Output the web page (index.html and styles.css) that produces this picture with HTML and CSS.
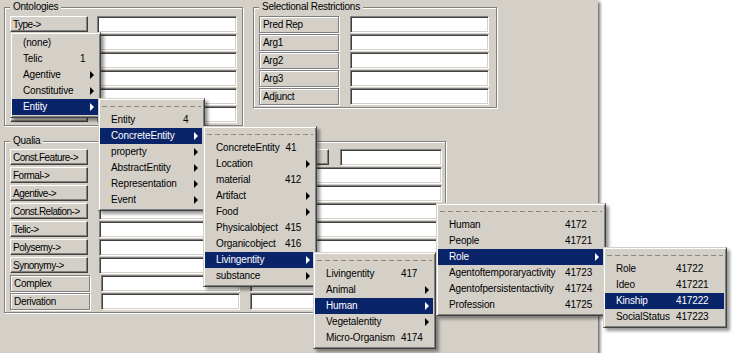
FILE: index.html
```html
<!DOCTYPE html>
<html>
	<head>
		<title>Ontology editor</title>
		<link rel="stylesheet" href="styles.css">
	</head>
	<body>
		<div class="window">
			<div class="top-row">
				<fieldset class="group ontologies">
					<legend>Ontologies</legend>
					<div class="row"><button class="btn">Type-&gt;</button><input class="field" type="text"></div>
					<div class="row"><button class="btn"></button><input class="field" type="text"></div>
					<div class="row"><button class="btn"></button><input class="field" type="text"></div>
					<div class="row"><button class="btn"></button><input class="field" type="text"></div>
					<div class="row"><button class="btn"></button><input class="field" type="text"></div>
					<div class="row"><button class="btn"></button><input class="field" type="text"></div>
				</fieldset>
				<fieldset class="group selectional">
					<legend>Selectional Restrictions</legend>
					<div class="row"><span class="tag">Pred Rep</span><input class="field" type="text"></div>
					<div class="row"><span class="tag">Arg1</span><input class="field" type="text"></div>
					<div class="row"><span class="tag">Arg2</span><input class="field" type="text"></div>
					<div class="row"><span class="tag">Arg3</span><input class="field" type="text"></div>
					<div class="row"><span class="tag">Adjunct</span><input class="field" type="text"></div>
				</fieldset>
			</div>
			<fieldset class="group qualia">
				<legend>Qualia</legend>
				<div class="qualia-cols">
					<div class="col">
						<div class="row"><button class="btn">Const.Feature-&gt;</button><input class="field" type="text"></div>
						<div class="row"><button class="btn">Formal-&gt;</button><input class="field" type="text"></div>
						<div class="row"><button class="btn">Agentive-&gt;</button><input class="field" type="text"></div>
						<div class="row"><button class="btn">Const.Relation-&gt;</button><input class="field" type="text"></div>
						<div class="row"><button class="btn">Telic-&gt;</button><input class="field" type="text"></div>
						<div class="row"><button class="btn">Polysemy-&gt;</button><input class="field" type="text"></div>
						<div class="row"><button class="btn">Synonymy-&gt;</button><input class="field" type="text"></div>
						<div class="row"><span class="tag">Complex</span><input class="field" type="text"></div>
						<div class="row"><span class="tag">Derivation</span><input class="field" type="text"></div>
					</div>
					<div class="col extra">
						<div class="row"><button class="btn"></button><input class="field" type="text"></div>
						<div class="row"><input class="field" type="text"></div>
						<div class="row"><input class="field" type="text"></div>
						<div class="row"><input class="field" type="text"></div>
						<div class="row"><input class="field" type="text"></div>
						<div class="row"><input class="field" type="text"></div>
						<div class="row"><input class="field" type="text"></div>
						<div class="row"><input class="field" type="text"></div>
						<div class="row"><input class="field" type="text"></div>
					</div>
				</div>
			</fieldset>

			<!-- cascade of popup menus opened from Type-> -->
			<div class="menu m-type">
				<div class="item"><span class="lbl">(none)</span></div>
				<div class="item"><span class="lbl">Telic</span><span class="num">1</span></div>
				<div class="item sub"><span class="lbl">Agentive</span></div>
				<div class="item sub"><span class="lbl">Constitutive</span></div>
				<div class="item sub active"><span class="lbl">Entity</span></div>
			</div>
			<div class="menu m-entity">
				<div class="tear"></div>
				<div class="item"><span class="lbl">Entity</span><span class="num">4</span></div>
				<div class="item sub active"><span class="lbl">ConcreteEntity</span></div>
				<div class="item sub"><span class="lbl">property</span></div>
				<div class="item sub"><span class="lbl">AbstractEntity</span></div>
				<div class="item sub"><span class="lbl">Representation</span></div>
				<div class="item sub"><span class="lbl">Event</span></div>
			</div>
			<div class="menu m-concrete">
				<div class="tear"></div>
				<div class="item"><span class="lbl">ConcreteEntity</span><span class="num">41</span></div>
				<div class="item sub"><span class="lbl">Location</span></div>
				<div class="item"><span class="lbl">material</span><span class="num">412</span></div>
				<div class="item sub"><span class="lbl">Artifact</span></div>
				<div class="item sub"><span class="lbl">Food</span></div>
				<div class="item"><span class="lbl">Physicalobject</span><span class="num">415</span></div>
				<div class="item"><span class="lbl">Organicobject</span><span class="num">416</span></div>
				<div class="item sub active"><span class="lbl">Livingentity</span></div>
				<div class="item sub"><span class="lbl">substance</span></div>
			</div>
			<div class="menu m-living">
				<div class="tear"></div>
				<div class="item"><span class="lbl">Livingentity</span><span class="num">417</span></div>
				<div class="item sub"><span class="lbl">Animal</span></div>
				<div class="item sub active"><span class="lbl">Human</span></div>
				<div class="item sub"><span class="lbl">Vegetalentity</span></div>
				<div class="item"><span class="lbl">Micro-Organism</span><span class="num">4174</span></div>
			</div>
			<div class="menu m-human">
				<div class="tear"></div>
				<div class="item"><span class="lbl">Human</span><span class="num">4172</span></div>
				<div class="item"><span class="lbl">People</span><span class="num">41721</span></div>
				<div class="item sub active"><span class="lbl">Role</span></div>
				<div class="item"><span class="lbl">Agentoftemporaryactivity</span><span class="num">41723</span></div>
				<div class="item"><span class="lbl">Agentofpersistentactivity</span><span class="num">41724</span></div>
				<div class="item"><span class="lbl">Profession</span><span class="num">41725</span></div>
			</div>
			<div class="menu m-role">
				<div class="tear"></div>
				<div class="item"><span class="lbl">Role</span><span class="num">41722</span></div>
				<div class="item"><span class="lbl">Ideo</span><span class="num">417221</span></div>
				<div class="item active"><span class="lbl">Kinship</span><span class="num">417222</span></div>
				<div class="item"><span class="lbl">SocialStatus</span><span class="num">417223</span></div>
			</div>
		</div>
	</body>
</html>
```

FILE: styles.css
```css
body
{
	margin: 0;
	background-color: #ffffff;
	font-family: "Liberation Sans", Arial, sans-serif;
	font-size: 10px;
	color: #000000;
}

.window
{
	position: relative;
	width: 598px;
	height: 353px;
	padding: 1px 0 0 4px;
	box-sizing: border-box;
	background-color: #d4d0c8;
	box-shadow: 2px 2px 3px rgba(0, 0, 0, 0.6);
}

.top-row
{
	display: flex;
	align-items: flex-start;
	gap: 10px;
}

/* etched group boxes */
.group
{
	margin: 0;
	padding: 3px 5px 1px 5px;
	box-sizing: border-box;
	border: 1px solid #808080;
	box-shadow: 1px 1px 0 #ffffff, inset 1px 1px 0 #ffffff;
	min-width: 0;
}

.group legend
{
	padding: 0 3px;
	line-height: 12px;
	letter-spacing: -0.25px;
	background-color: #d4d0c8;
}

.ontologies
{
	width: 239px;
}

.selectional
{
	width: 244px;
}

.qualia
{
	width: 442px;
	margin-top: 9px;
	padding-top: 2px;
}

.row
{
	display: flex;
	align-items: flex-start;
	height: 18px;
}

.btn
{
	width: 78px;
	height: 16px;
	margin: 0 11px 0 0;
	padding: 0 0 0 2px;
	font: inherit;
	letter-spacing: -0.5px;
	color: #000000;
	text-align: left;
	white-space: nowrap;
	overflow: hidden;
	background-color: #d4d0c8;
	border: 1px solid;
	border-color: #ffffff #404040 #404040 #ffffff;
	box-shadow: inset -1px -1px 0 #808080;
	box-sizing: border-box;
}

.ontologies .btn
{
	margin-right: 9px;
}

.tag
{
	width: 80px;
	height: 17px;
	margin-right: 11px;
	padding-left: 3px;
	line-height: 15px;
	letter-spacing: -0.3px;
	box-sizing: border-box;
	border: 1px solid #808080;
	box-shadow: 1px 1px 0 #ffffff, inset 1px 1px 0 #ffffff;
}

.field
{
	width: 139px;
	height: 17px;
	margin: 0;
	padding: 0 2px;
	font: inherit;
	box-sizing: border-box;
	background-color: #ffffff;
	border: 1px solid;
	border-color: #808080 #ffffff #ffffff #808080;
	box-shadow: inset 1px 1px 0 #404040, inset -1px -1px 0 #d4d0c8;
	outline: none;
}

.ontologies .field
{
	width: 140px;
}

.qualia-cols
{
	display: flex;
	gap: 10px;
}

.extra .field
{
	width: 192px;
}

.extra .btn
{
	width: 79px;
}

.extra .btn + .field
{
	width: 102px;
}

/* popup menus */
.menu
{
	position: absolute;
	padding: 2px 0;
	box-sizing: border-box;
	letter-spacing: -0.15px;
	background-color: #d4d0c8;
	border: 1px solid;
	border-color: #d4d0c8 #404040 #404040 #d4d0c8;
	box-shadow: inset 1px 1px 0 #ffffff, inset -1px -1px 0 #808080, 3px 3px 3px rgba(0, 0, 0, 0.4);
}

.m-type
{
	left: 10px;
	top: 32px;
	width: 91px;
}

.m-entity
{
	left: 98px;
	top: 98px;
	width: 107px;
}

.m-concrete
{
	left: 203px;
	top: 126px;
	width: 114px;
}

.m-living
{
	left: 313px;
	top: 252px;
	width: 123px;
}

.m-human
{
	left: 436px;
	top: 203px;
	width: 170px;
}

.m-role
{
	left: 603px;
	top: 247px;
	width: 124px;
}

.tear
{
	height: 11px;
	margin: 0 3px;
	background-image: repeating-linear-gradient(to right, #8a877f 0 5px, transparent 5px 8px);
	background-size: 100% 1px;
	background-position: 0 5px;
	background-repeat: no-repeat;
}

.item
{
	position: relative;
	display: flex;
	height: 16px;
	line-height: 16px;
	margin: 0 2px 0 1px;
	padding-left: 11px;
	white-space: nowrap;
}

.item .num
{
	margin-left: 6px;
}

.item.active
{
	background-color: #0a246a;
	color: #ffffff;
}

.item.sub::after
{
	content: "";
	position: absolute;
	right: 4px;
	top: 4px;
	border-left: 4px solid #000000;
	border-top: 4px solid transparent;
	border-bottom: 4px solid transparent;
}

.item.sub.active::after
{
	border-left-color: #ffffff;
}

.m-type .lbl
{
	min-width: 51px;
}

.m-entity .lbl
{
	min-width: 66px;
}

.m-concrete .lbl
{
	min-width: 63px;
}

.m-living .lbl
{
	min-width: 69px;
}

.m-human .lbl
{
	min-width: 110px;
}

.m-role .lbl
{
	min-width: 54px;
}
```
